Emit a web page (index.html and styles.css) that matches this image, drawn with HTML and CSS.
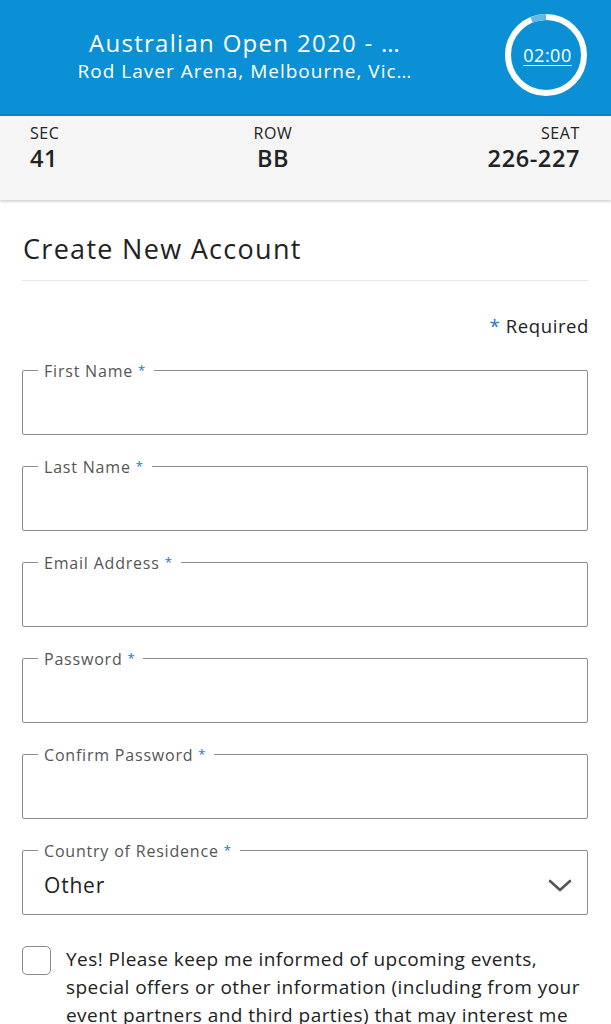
FILE: index.html
```html
<!DOCTYPE html>
<html>
<head>
<meta charset="utf-8">
<link rel="stylesheet" href="styles.css">
</head>
<body>
<header class="top">
  <div class="event">
    <div class="event-title">Australian Open 2020 - …</div>
    <div class="event-venue">Rod Laver Arena, Melbourne, Vic…</div>
  </div>
  <div class="timer">
    <svg class="ring" width="84" height="84" viewBox="0 0 84 84">
      <circle cx="42" cy="42" r="38" fill="none" stroke="#ffffff" stroke-width="6"/>
      <path d="M42 4 A38 38 0 0 0 27.5 6.9" fill="none" stroke="#62b9e8" stroke-width="6"/>
    </svg>
    <a class="time">02:00</a>
  </div>
</header>
<section class="seats">
  <div class="seat-col">
    <div class="seat-label">SEC</div>
    <div class="seat-value">41</div>
  </div>
  <div class="seat-col center">
    <div class="seat-label">ROW</div>
    <div class="seat-value">BB</div>
  </div>
  <div class="seat-col right">
    <div class="seat-label">SEAT</div>
    <div class="seat-value">226-227</div>
  </div>
</section>
<main class="content">
  <h1 class="heading">Create New Account</h1>
  <div class="required"><span class="star">*</span> Required</div>
  <form class="form">
    <fieldset class="field"><legend>First Name <span class="star">*</span></legend></fieldset>
    <fieldset class="field"><legend>Last Name <span class="star">*</span></legend></fieldset>
    <fieldset class="field"><legend>Email Address <span class="star">*</span></legend></fieldset>
    <fieldset class="field"><legend>Password <span class="star">*</span></legend></fieldset>
    <fieldset class="field"><legend>Confirm Password <span class="star">*</span></legend></fieldset>
    <fieldset class="field select"><legend>Country of Residence <span class="star">*</span></legend>
      <span class="select-value">Other</span>
      <svg class="chev" width="24" height="14" viewBox="0 0 24 14"><path d="M2 2 L12 11 L22 2" fill="none" stroke="#555" stroke-width="2.6" stroke-linecap="round" stroke-linejoin="round"/></svg>
    </fieldset>
    <label class="check">
      <span class="box"></span>
      <span class="check-text">Yes! Please keep me informed of upcoming events, special offers or other information (including from your event partners and third parties) that may interest me</span>
    </label>
  </form>
</main>
</body>
</html>
```

FILE: styles.css
```css
html, body {
  margin: 0;
  padding: 0;
  background: #ffffff;
  font-family: "Open Sans", Lato, "Liberation Sans", sans-serif;
  color: #222;
}

.top {
  background: #0b90d5;
  height: 114px;
  display: flex;
  align-items: center;
  box-sizing: border-box;
  padding: 0 23px 0 0;
}

.event {
  flex: 1;
  text-align: center;
  color: #fff;
  margin-top: -2px;
}

.event-title {
  font-size: 24px;
  line-height: 30px;
  letter-spacing: 1.3px;
}

.event-venue {
  font-size: 19px;
  line-height: 26px;
  letter-spacing: 1px;
}

.timer {
  position: relative;
  width: 84px;
  height: 84px;
  margin-top: -4px;
  margin-left: 14px;
}

.ring {
  display: block;
}

.time {
  position: absolute;
  left: 3px;
  right: 0;
  top: 0;
  bottom: 0;
  display: flex;
  align-items: center;
  justify-content: center;
  color: #fff;
  font-size: 18px;
  letter-spacing: 0.5px;
  text-decoration: underline;
  text-underline-offset: 3px;
}

.seats {
  background: #f5f5f5;
  height: 86px;
  box-sizing: border-box;
  padding: 6px 31px 0 30px;
  display: grid;
  grid-template-columns: 1fr 1fr 1fr;
  box-shadow: 0 2px 2px rgba(0,0,0,0.15);
  border-top: 2px solid #0a80c0;
}

.seat-col.center {
  text-align: center;
  padding-right: 64px;
}

.seat-col.right { text-align: right; }

.seat-label {
  font-size: 16px;
  line-height: 22px;
  color: #222;
  letter-spacing: 0.6px;
}

.seat-value {
  font-size: 23.5px;
  line-height: 28px;
  font-weight: 600;
  color: #222;
  letter-spacing: 0.6px;
}

.content {
  padding: 0 23px 0 22px;
}

.heading {
  margin: 0;
  padding: 30px 0 13px 1px;
  font-size: 27px;
  font-weight: 500;
  line-height: 37px;
  letter-spacing: 1.3px;
  border-bottom: 1px solid #e6e6e6;
}

.required {
  text-align: right;
  font-size: 18.5px;
  line-height: 24px;
  letter-spacing: 0.6px;
  margin-top: 33px;
  margin-right: -1px;
}

.star {
  color: #1a73d9;
}

.form {
  margin-top: 22px;
}

.field {
  margin: 0 0 21px 0;
  padding: 0;
  height: 75px;
  box-sizing: border-box;
  border: 1.5px solid #8a8a8a;
  border-radius: 2px;
  position: relative;
}

.field legend {
  font-size: 16px;
  line-height: 20px;
  letter-spacing: 0.8px;
  color: #555;
  padding: 0 8px 0 6px;
  margin-left: 15px;
}

.field legend .star {
  font-size: 13px;
  vertical-align: 2px;
}

.select-value {
  position: absolute;
  left: 21px;
  top: 11px;
  font-size: 21px;
  line-height: 26px;
  letter-spacing: 0.8px;
  color: #222;
}

.chev {
  position: absolute;
  right: 15px;
  top: 18px;
}

.check {
  display: flex;
  align-items: flex-start;
  gap: 15px;
  margin-top: 31px;
}

.box {
  flex: none;
  width: 27px;
  height: 27px;
  border: 1.5px solid #8a8a8a;
  border-radius: 5px;
  margin-top: 0;
}

.check-text {
  font-size: 19px;
  line-height: 28px;
  letter-spacing: 0.45px;
  color: #222;
  margin-top: -1px;
}
```
